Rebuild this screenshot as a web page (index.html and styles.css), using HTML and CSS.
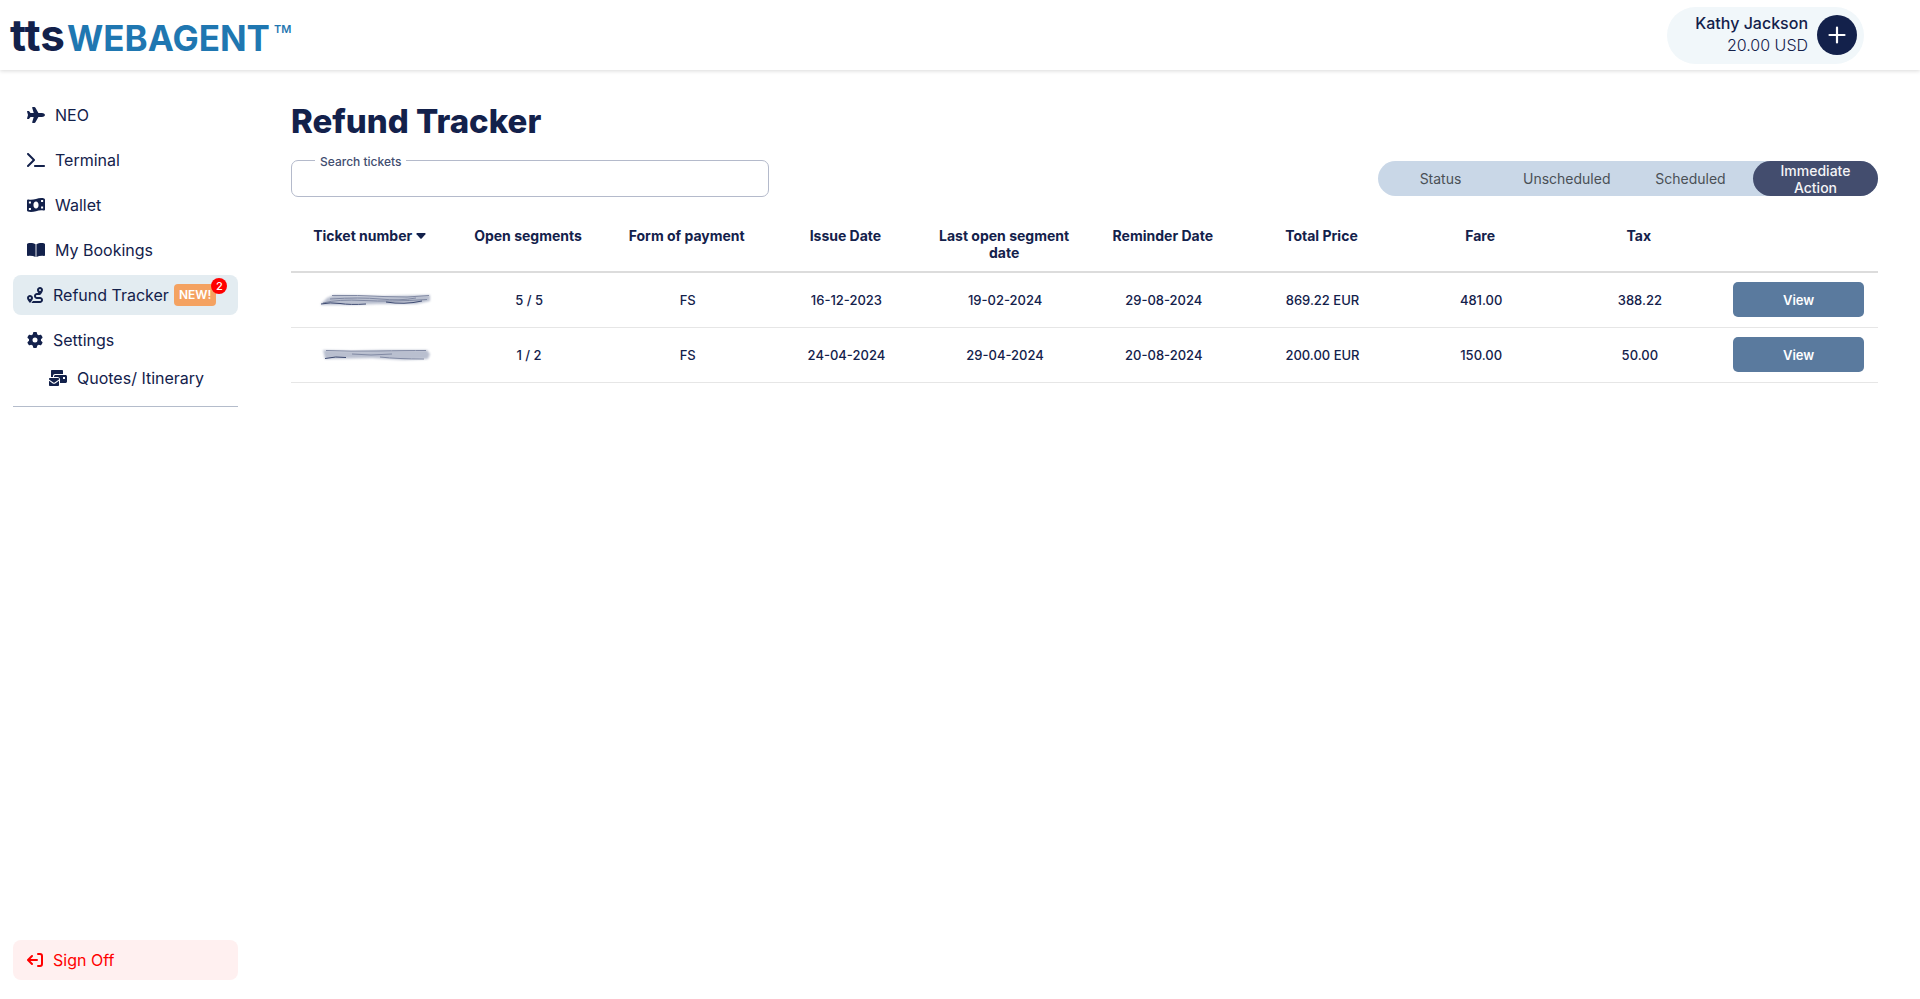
FILE: index.html
```
<!DOCTYPE html>
<html lang="en">
<head>
    <meta charset="UTF-8">
    <meta name="viewport" content="width=device-width, initial-scale=1.0">
    <title>Refund Tracker</title>
    <link rel="stylesheet" href="styles.css">
</head>
<body>
    <header class="topbar">
        <a href="#" class="logo"><span class="logo-tts">tts</span><span class="logo-name">WEBAGENT</span><span class="logo-tm">TM</span></a>
        <div class="account">
            <div class="account-info">
                <div class="account-name">Kathy Jackson</div>
                <div class="account-balance">20.00 USD</div>
            </div>
            <button type="button" class="add-btn" aria-label="Add funds">
                <svg width="18" height="18" viewBox="0 0 18 18" fill="none" stroke="currentColor" stroke-width="2.2" stroke-linecap="round"><path d="M9 1.500V16.500M1.500 9H16.500"/></svg>
            </button>
        </div>
    </header>

    <div class="layout">
        <nav class="sidebar">
            <a href="#" class="nav-item">
                <svg class="icon" width="18" height="16" viewBox="0 0 576 512"><path d="M482.300 192c34.200 0 93.700 29 93.700 64c0 36-59.500 64-93.700 64l-116.600 0L265.200 495.900c-5.700 10-16.300 16.100-27.800 16.100l-56.200 0c-10.600 0-18.300-10.200-15.400-20.400l49-171.600L112 320 68.800 377.600c-3 4-7.800 6.400-12.800 6.400l-42 0c-7.800 0-14-6.300-14-14c0-1.300 .2-2.600 .5-3.900L32 256 .5 145.900c-.4-1.300-.5-2.600-.5-3.900c0-7.800 6.300-14 14-14l42 0c5 0 9.800 2.400 12.800 6.400L112 192l102.900 0-49-171.600C162.900 10.200 170.600 0 181.200 0l56.200 0c11.500 0 22.100 6.200 27.800 16.100L365.700 192l116.600 0z"/></svg>
                <span>NEO</span>
            </a>
            <a href="#" class="nav-item">
                <svg class="icon" width="18" height="16" viewBox="0 0 576 512"><path d="M9.400 86.600C-3.100 74.100-3.100 53.900 9.400 41.400s32.800-12.500 45.300 0l192 192c12.500 12.500 12.500 32.800 0 45.300l-192 192c-12.500 12.500-32.800 12.500-45.300 0s-12.500-32.800 0-45.300L178.700 256 9.400 86.600zM256 416l288 0c17.700 0 32 14.300 32 32s-14.300 32-32 32l-288 0c-17.700 0-32-14.300-32-32s14.300-32 32-32z"/></svg>
                <span>Terminal</span>
            </a>
            <a href="#" class="nav-item">
                <svg class="icon" width="18" height="16" viewBox="0 0 576 512"><path fill-rule="evenodd" d="M0 112V422C0 440 10 457 27 463C114 488 201 474 288 452C368 431 448 411 527 433C550 439 576 423 576 400V90C576 72 566 55 549 48C462 24 375 38 288 60C208 81 128 101 49 79C26 73 0 89 0 112zM288 368C240 368 206 320 206 256S240 144 288 144S370 192 370 256S336 368 288 368zM60 350h66v66H60zM60 144h66v62H60zM450 304h66v62h-66zM450 96h66v64h-66z"/></svg>
                <span>Wallet</span>
            </a>
            <a href="#" class="nav-item">
                <svg class="icon" width="18" height="16" viewBox="0 0 576 512"><path d="M274 72V480C205 447 125 438 37 446C16 448 0 432 0 412V76C0 56 15 39 35 37C120 26 215 30 274 72zM302 72C361 30 456 26 541 37C561 39 576 56 576 76V412C576 432 560 448 539 446C451 438 371 447 302 480z"/></svg>
                <span>My Bookings</span>
            </a>
            <a href="#" class="nav-item active">
                <svg class="icon" width="16" height="16" viewBox="0 0 512 512"><path fill-rule="evenodd" d="M512 96c0 50.200-59.100 125.100-84.600 155c-3.800 4.400-9.400 6.100-14.500 5H320c-17.700 0-32 14.300-32 32s14.300 32 32 32h96c53 0 96 43 96 96s-43 96-96 96H139.600c8.700-9.900 19.300-22.600 30-36.800c6.300-8.400 12.800-17.600 19-27.200H416c17.700 0 32-14.300 32-32s-14.300-32-32-32H320c-53 0-96-43-96-96s43-96 96-96h39.800c-21-31.500-39.800-67.700-39.800-96c0-53 43-96 96-96s96 43 96 96zM117.100 489.100c-3.800 4.300-7.200 8.100-10.100 11.300l-1.800 2-.2-.2c-6 4.600-14.600 4-20-1.800C59.800 473 0 402.500 0 352c0-53 43-96 96-96s96 43 96 96c0 30-21.100 67-43.500 97.900c-10.700 14.700-21.700 28-30.800 38.500zM128 352a32 32 0 1 0-64 0 32 32 0 1 0 64 0zM416 128a32 32 0 1 0 0-64 32 32 0 1 0 0 64z"/></svg>
                <span>Refund Tracker</span>
                <span class="new-tag">NEW!<span class="count">2</span></span>
            </a>
            <a href="#" class="nav-item">
                <svg class="icon" width="16" height="16" viewBox="0 0 512 512"><path d="M495.900 166.600c3.200 8.700 .5 18.400-6.400 24.600l-43.300 39.400c1.100 8.300 1.700 16.800 1.700 25.400s-.6 17.100-1.700 25.400l43.300 39.400c6.900 6.200 9.600 15.900 6.400 24.600c-4.400 11.900-9.700 23.300-15.800 34.300l-4.700 8.100c-6.600 11-14 21.400-22.100 31.200c-5.900 7.200-15.700 9.600-24.500 6.800l-55.700-17.700c-13.400 10.300-28.200 18.900-44 25.400l-12.500 57.100c-2 9.100-9 16.300-18.200 17.800c-13.800 2.300-28 3.500-42.500 3.500s-28.700-1.200-42.500-3.500c-9.200-1.500-16.200-8.700-18.200-17.800l-12.500-57.100c-15.800-6.500-30.600-15.100-44-25.400L83.100 425.900c-8.800 2.800-18.600 .3-24.500-6.800c-8.100-9.800-15.500-20.200-22.100-31.200l-4.700-8.100c-6.100-11-11.400-22.400-15.800-34.300c-3.200-8.700-.5-18.400 6.400-24.600l43.300-39.400C64.600 273.100 64 264.600 64 256s.6-17.100 1.700-25.400L22.400 191.200c-6.900-6.200-9.600-15.900-6.400-24.600c4.400-11.900 9.700-23.300 15.800-34.300l4.700-8.100c6.600-11 14-21.400 22.100-31.200c5.900-7.200 15.700-9.600 24.500-6.800l55.700 17.700c13.400-10.300 28.200-18.900 44-25.400l12.500-57.100c2-9.100 9-16.300 18.200-17.800C227.300 1.200 241.500 0 256 0s28.700 1.200 42.500 3.500c9.200 1.500 16.200 8.700 18.200 17.800l12.500 57.100c15.800 6.500 30.600 15.100 44 25.400l55.700-17.700c8.800-2.800 18.600-.3 24.500 6.800c8.100 9.800 15.500 20.200 22.100 31.200l4.700 8.100c6.100 11 11.400 22.400 15.800 34.300zM256 336a80 80 0 1 0 0-160 80 80 0 1 0 0 160z"/></svg>
                <span>Settings</span>
            </a>
            <a href="#" class="nav-item sub">
                <svg class="icon" width="18" height="16" viewBox="0 0 576 512"><path fill-rule="evenodd" d="M64 32C64 14 78 0 96 0h320c18 0 32 14 32 32v96H192c-35 0-64 29-64 64v32H64zM528 160c26 0 48 21 48 48v160c0 27-22 48-48 48H352V304c0-42-34-80-80-80H160v-16c0-27 22-48 48-48zM448 288h64v-64h-64zM0 288c0-18 14-32 32-32h256c18 0 32 14 32 32v12L180 402c-12 9-28 9-40 0L0 300zM0 340l120 88c24 18 56 18 80 0l120-88v140c0 18-14 32-32 32H32c-18 0-32-14-32-32z"/></svg>
                <span>Quotes/ Itinerary</span>
            </a>
            <hr class="divider">
            <a href="#" class="nav-item sign-off">
                <svg class="icon" width="16" height="16" viewBox="0 0 16 16" fill="none" stroke="currentColor" stroke-width="2" stroke-linecap="round" stroke-linejoin="round"><path d="M10 8H1.500M5 4L1 8L5 12M11 2H13Q15 2 15 4V12Q15 14 13 14H11"/></svg>
                <span>Sign Off</span>
            </a>
        </nav>

        <main class="content">
            <h1>Refund Tracker</h1>
            <div class="toolbar">
                <div class="search">
                    <label for="search">Search tickets</label>
                    <input type="text" id="search">
                </div>
                <div class="filters">
                    <button type="button" class="filter-btn">Status</button>
                    <button type="button" class="filter-btn">Unscheduled</button>
                    <button type="button" class="filter-btn">Scheduled</button>
                    <button type="button" class="filter-btn active">Immediate Action</button>
                </div>
            </div>

            <table class="tickets">
                <thead>
                    <tr>
                        <th class="sorted">Ticket number <svg class="caret" width="10" height="6" viewBox="0 0 10 6"><path d="M1 0H9Q10 0.500 9.400 1.300L5.700 5.500Q5 6 4.300 5.500L.6 1.300Q0 .5 1 0z"/></svg></th>
                        <th>Open segments</th>
                        <th>Form of payment</th>
                        <th>Issue Date</th>
                        <th>Last open segment date</th>
                        <th>Reminder Date</th>
                        <th>Total Price</th>
                        <th>Fare</th>
                        <th>Tax</th>
                        <th></th>
                    </tr>
                </thead>
                <tbody>
                    <tr>
                        <td class="ticket-number">
                            <svg class="scribble" width="116" height="16" viewBox="0 0 116 16">
                                <path class="smear" d="M3 12L9 6L16 3L65 4L112 3L112 9L98 12L60 12L30 13L3 13z"/>
                                <path class="stroke" d="M14 3.500Q40 3 65 4.500T111 3.500M5 11Q20 7 46 8.500T109 7.500M12 7Q42 5 62 7T98 6"/>
                                <path class="stroke dark" d="M3 12Q12 10 22 11.500T48 12M68 10Q86 13 104 9"/>
                            </svg>
                        </td>
                        <td>5 / 5</td>
                        <td>FS</td>
                        <td>16-12-2023</td>
                        <td>19-02-2024</td>
                        <td>29-08-2024</td>
                        <td>869.22 EUR</td>
                        <td>481.00</td>
                        <td>388.22</td>
                        <td><button type="button" class="view-btn">View</button></td>
                    </tr>
                    <tr>
                        <td class="ticket-number">
                            <svg class="scribble" width="116" height="16" viewBox="0 0 116 16">
                                <path class="smear" d="M5 3L34 4L65 3L109 3L112 7L110 12L86 13L54 11L7 12z"/>
                                <path class="stroke" d="M8 3.500Q32 4.500 60 4T108 3.500M34 7Q52 9 74 7M62 10Q80 12 106 12"/>
                                <path class="stroke dark" d="M7 11.500Q18 9 28 10.500"/>
                            </svg>
                        </td>
                        <td>1 / 2</td>
                        <td>FS</td>
                        <td>24-04-2024</td>
                        <td>29-04-2024</td>
                        <td>20-08-2024</td>
                        <td>200.00 EUR</td>
                        <td>150.00</td>
                        <td>50.00</td>
                        <td><button type="button" class="view-btn">View</button></td>
                    </tr>
                </tbody>
            </table>
        </main>
    </div>
</body>
</html>
```
FILE: styles.css
```
/* Base Reset */
* {
    margin: 0;
    padding: 0;
    box-sizing: border-box;
}

body {
    font-family: 'Inter', sans-serif;
    font-size: 16px;
    color: #13214b;
    background: #fff;
    min-height: 100vh;
    display: flex;
    flex-direction: column;
}

a {
    color: inherit;
    text-decoration: none;
}

button,
input {
    font-family: inherit;
    color: inherit;
    border: none;
}

button {
    cursor: pointer;
}

/* Header */
.topbar {
    display: flex;
    justify-content: space-between;
    align-items: center;
    height: 70px;
    padding: 0 56px 0 10px;
    box-shadow: 0 1px 4px rgba(0,0,0,0.15);
}

.logo {
    display: flex;
    align-items: baseline;
    padding-top: 2px;
    line-height: 50px;
}

.logo-tts {
    font-size: 44px;
    font-weight: 700;
}

.logo-name {
    margin-left: 2px;
    font-size: 35px;
    font-weight: 700;
    color: #1f77b1;
}

.logo-tm {
    align-self: flex-start;
    margin-left: 4px;
    font-size: 11px;
    font-weight: 600;
    line-height: 38px;
    color: #1f77b1;
}

.account {
    display: flex;
    align-items: center;
    gap: 9px;
    height: 57px;
    padding: 0 7px 0 28px;
    border-radius: 29px;
    background: #f1f7fa;
}

.account-info {
    padding-bottom: 2px;
    line-height: 22px;
    text-align: right;
}

.account-name {
    font-weight: 500;
}

.account-balance {
    font-weight: 300;
}

.add-btn {
    display: flex;
    justify-content: center;
    align-items: center;
    width: 40px;
    height: 40px;
    border-radius: 50%;
    background: #13214b;
    color: #fff;
}

/* Page Layout */
.layout {
    flex: 1;
    display: flex;
}

/* Sidebar */
.sidebar {
    display: flex;
    flex-direction: column;
    gap: 5px;
    flex: 0 0 238px;
    padding: 25px 0 19px 13px;
}

.nav-item {
    display: flex;
    align-items: center;
    gap: 10px;
    height: 40px;
    padding: 0 14px;
    border-radius: 8px;
}

.nav-item.active {
    background: #e3ecf1;
}

.nav-item.sub {
    height: 36px;
    margin-top: -5px;
    padding-left: 36px;
}

.icon {
    flex: none;
    fill: currentColor;
}

.new-tag {
    position: relative;
    margin-left: -5px;
    padding: 0 5px;
    border-radius: 4px;
    background: #f4a261;
    color: #fff;
    font-size: 12px;
    font-weight: 600;
    line-height: 22px;
}

.count {
    position: absolute;
    top: -6px;
    right: -11px;
    width: 16px;
    height: 16px;
    border-radius: 50%;
    background: #f00;
    font-size: 11px;
    font-weight: 500;
    line-height: 16px;
    text-align: center;
}

.divider {
    margin-top: 5px;
    border: none;
    border-top: 1px solid #b4bccb;
}

.sign-off {
    margin-top: auto;
    background: #fff0f0;
    color: #f00;
}

.sign-off .icon {
    fill: none;
}

/* Main Content */
.content {
    flex: 1;
    padding: 26px 42px 0 53px;
}

h1 {
    font-size: 33px;
    font-weight: 800;
    line-height: 50px;
}

.toolbar {
    display: flex;
    justify-content: space-between;
    align-items: center;
    margin-top: 14px;
}

.search {
    position: relative;
    width: 478px;
}

.search label {
    position: absolute;
    top: -6px;
    left: 24px;
    padding: 0 5px;
    background: #fff;
    color: #424d6f;
    font-size: 12px;
    font-weight: 500;
    line-height: 16px;
}

.search input {
    display: block;
    width: 100%;
    height: 37px;
    padding: 0 16px;
    border: 1px solid #b4bacb;
    border-radius: 7px;
    font-size: 14px;
}

.filters {
    display: grid;
    grid-template-columns: repeat(4, 125px);
    height: 35px;
    border-radius: 18px;
    background: #c9d7e7;
}

.filter-btn {
    padding: 0 20px;
    border-radius: 18px;
    background: transparent;
    color: #4a5056;
    font-size: 14px;
    line-height: 17px;
}

.filter-btn.active {
    background: #434d6e;
    color: #f4f4f6;
    font-weight: 500;
}

/* Tickets Table */
.tickets {
    width: 100%;
    margin-top: 21px;
    table-layout: fixed;
    border-collapse: collapse;
    text-align: center;
}

.tickets th {
    padding: 9px 12px 10px 10px;
    border-bottom: 2px solid #dcdcdc;
    font-size: 14px;
    font-weight: 700;
    line-height: 17px;
    vertical-align: top;
}

.tickets th.sorted {
    white-space: nowrap;
}

.caret {
    fill: currentColor;
    vertical-align: 2px;
}

.tickets td {
    height: 55px;
    padding: 0 14px;
    border-bottom: 1px solid #e6e6e6;
    font-size: 13px;
    font-weight: 500;
}

.tickets .ticket-number {
    padding: 0 8px 0 20px;
}

.view-btn {
    width: 100%;
    height: 35px;
    border-radius: 5px;
    background: #5a7a9e;
    color: #fff;
    font-size: 13px;
    font-weight: 600;
}

.scribble {
    display: block;
    margin: 0 auto;
}

.smear {
    fill: #b9bfcf;
    filter: blur(1px);
}

.stroke {
    fill: none;
    stroke: #8089a3;
    stroke-width: 1;
    filter: blur(0.6px);
}

.stroke.dark {
    stroke: #3c4970;
}
```
